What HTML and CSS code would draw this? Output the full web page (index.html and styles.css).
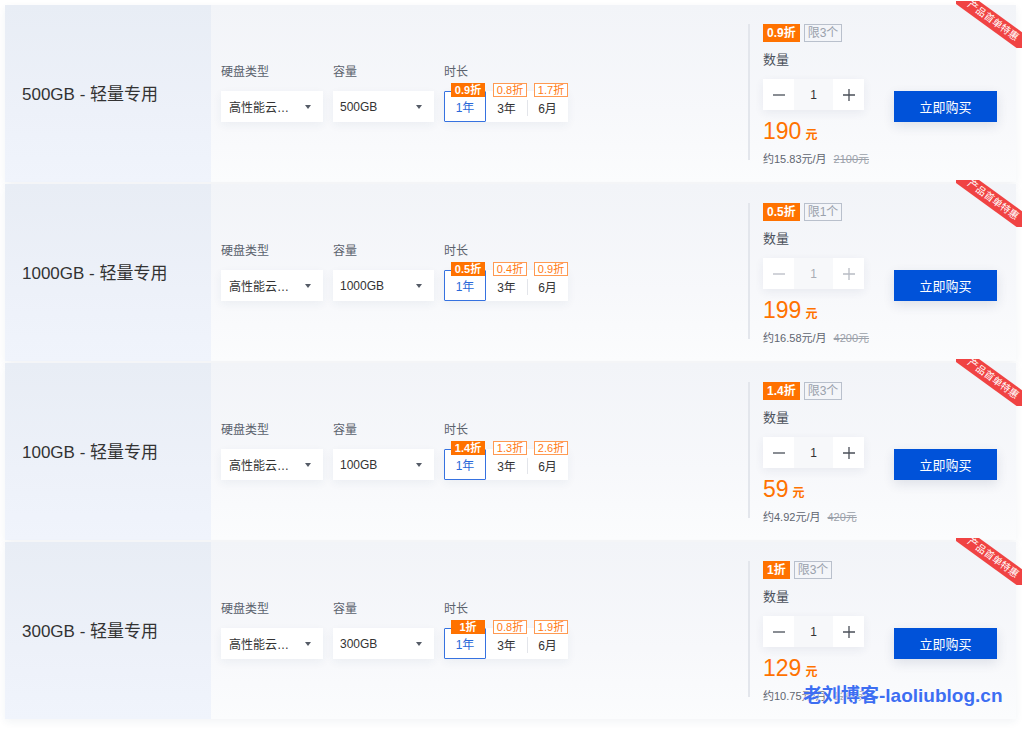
FILE: index.html
```html
<!DOCTYPE html>
<html lang="zh-CN">
<head>
<meta charset="utf-8">
<title>轻量专用</title>
<link rel="stylesheet" href="styles.css">
</head>
<body>
<div class="list">

  <div class="card">
    <div class="name">500GB - 轻量专用</div>
    <div class="config">
      <div class="field"><div class="label">硬盘类型</div><div class="select s-type"><span>高性能云…</span><i class="caret"></i></div></div>
      <div class="field"><div class="label">容量</div><div class="select s-cap"><span>500GB</span><i class="caret"></i></div></div>
      <div class="field"><div class="label">时长</div>
        <div class="seg">
          <div class="opt active"><span class="ttag fill">0.9折</span>1年</div>
          <div class="opt"><span class="ttag">0.8折</span>3年</div>
          <div class="opt sep"><span class="ttag">1.7折</span>6月</div>
        </div>
      </div>
    </div>
    <div class="buy">
      <div class="order">
        <div class="tags"><span class="tag fill">0.9折</span><span class="tag limit">限3个</span></div>
        <div class="qlabel">数量</div>
        <div class="counter">
          <div class="cbtn"><svg width="14" height="14" viewBox="0 0 14 14"><path d="M1 7h12" /></svg></div>
          <div class="cval">1</div>
          <div class="cbtn"><svg width="14" height="14" viewBox="0 0 14 14"><path d="M1 7h12M7 1v12" /></svg></div>
        </div>
        <div class="price">190<span class="unit">元</span></div>
        <div class="sub">约15.83元/月<s>2100元</s></div>
      </div>
      <button class="btn">立即购买</button>
    </div>
    <div class="ribbon"></div>
    <div class="ribbon-text">产品首单特惠</div>
  </div>

  <div class="card">
    <div class="name">1000GB - 轻量专用</div>
    <div class="config">
      <div class="field"><div class="label">硬盘类型</div><div class="select s-type"><span>高性能云…</span><i class="caret"></i></div></div>
      <div class="field"><div class="label">容量</div><div class="select s-cap"><span>1000GB</span><i class="caret"></i></div></div>
      <div class="field"><div class="label">时长</div>
        <div class="seg">
          <div class="opt active"><span class="ttag fill">0.5折</span>1年</div>
          <div class="opt"><span class="ttag">0.4折</span>3年</div>
          <div class="opt sep"><span class="ttag">0.9折</span>6月</div>
        </div>
      </div>
    </div>
    <div class="buy">
      <div class="order">
        <div class="tags"><span class="tag fill">0.5折</span><span class="tag limit">限1个</span></div>
        <div class="qlabel">数量</div>
        <div class="counter disabled">
          <div class="cbtn"><svg width="14" height="14" viewBox="0 0 14 14"><path d="M1 7h12" /></svg></div>
          <div class="cval">1</div>
          <div class="cbtn"><svg width="14" height="14" viewBox="0 0 14 14"><path d="M1 7h12M7 1v12" /></svg></div>
        </div>
        <div class="price">199<span class="unit">元</span></div>
        <div class="sub">约16.58元/月<s>4200元</s></div>
      </div>
      <button class="btn">立即购买</button>
    </div>
    <div class="ribbon"></div>
    <div class="ribbon-text">产品首单特惠</div>
  </div>

  <div class="card">
    <div class="name">100GB - 轻量专用</div>
    <div class="config">
      <div class="field"><div class="label">硬盘类型</div><div class="select s-type"><span>高性能云…</span><i class="caret"></i></div></div>
      <div class="field"><div class="label">容量</div><div class="select s-cap"><span>100GB</span><i class="caret"></i></div></div>
      <div class="field"><div class="label">时长</div>
        <div class="seg">
          <div class="opt active"><span class="ttag fill">1.4折</span>1年</div>
          <div class="opt"><span class="ttag">1.3折</span>3年</div>
          <div class="opt sep"><span class="ttag">2.6折</span>6月</div>
        </div>
      </div>
    </div>
    <div class="buy">
      <div class="order">
        <div class="tags"><span class="tag fill">1.4折</span><span class="tag limit">限3个</span></div>
        <div class="qlabel">数量</div>
        <div class="counter">
          <div class="cbtn"><svg width="14" height="14" viewBox="0 0 14 14"><path d="M1 7h12" /></svg></div>
          <div class="cval">1</div>
          <div class="cbtn"><svg width="14" height="14" viewBox="0 0 14 14"><path d="M1 7h12M7 1v12" /></svg></div>
        </div>
        <div class="price">59<span class="unit">元</span></div>
        <div class="sub">约4.92元/月<s>420元</s></div>
      </div>
      <button class="btn">立即购买</button>
    </div>
    <div class="ribbon"></div>
    <div class="ribbon-text">产品首单特惠</div>
  </div>

  <div class="card">
    <div class="name">300GB - 轻量专用</div>
    <div class="config">
      <div class="field"><div class="label">硬盘类型</div><div class="select s-type"><span>高性能云…</span><i class="caret"></i></div></div>
      <div class="field"><div class="label">容量</div><div class="select s-cap"><span>300GB</span><i class="caret"></i></div></div>
      <div class="field"><div class="label">时长</div>
        <div class="seg">
          <div class="opt active"><span class="ttag fill">1折</span>1年</div>
          <div class="opt"><span class="ttag">0.8折</span>3年</div>
          <div class="opt sep"><span class="ttag">1.9折</span>6月</div>
        </div>
      </div>
    </div>
    <div class="buy">
      <div class="order">
        <div class="tags"><span class="tag fill">1折</span><span class="tag limit">限3个</span></div>
        <div class="qlabel">数量</div>
        <div class="counter">
          <div class="cbtn"><svg width="14" height="14" viewBox="0 0 14 14"><path d="M1 7h12" /></svg></div>
          <div class="cval">1</div>
          <div class="cbtn"><svg width="14" height="14" viewBox="0 0 14 14"><path d="M1 7h12M7 1v12" /></svg></div>
        </div>
        <div class="price">129<span class="unit">元</span></div>
        <div class="sub">约10.75元/月<s>1260元</s></div>
      </div>
      <button class="btn">立即购买</button>
    </div>
    <div class="ribbon"></div>
    <div class="ribbon-text">产品首单特惠</div>
  </div>

</div>
<div class="watermark">老刘博客-laoliublog.cn</div>
</body>
</html>
```

FILE: styles.css
```css
html, body {
  margin: 0;
  padding: 0;
  background: #ffffff;
}
body {
  font-family: "Liberation Sans", "Noto Sans CJK SC", sans-serif;
  color: #333;
  position: relative;
  width: 1024px;
  height: 729px;
  overflow: hidden;
}
.list {
  width: 1011px;
  padding: 5px 0 0 5px;
  display: flex;
  flex-direction: column;
  gap: 2px;
}
.card {
  position: relative;
  height: 177px;
  display: flex;
  background: linear-gradient(180deg, #f2f4f8 0%, #f7f8fb 60%, #fbfcfd 100%);
  box-shadow: 0 3px 8px rgba(40, 60, 100, 0.06);
}
.name {
  width: 206px;
  flex: none;
  box-sizing: border-box;
  padding-left: 17px;
  padding-bottom: 2px;
  display: flex;
  align-items: center;
  font-size: 17px;
  color: #333;
  background: linear-gradient(180deg, #e8edf5 0%, #edf1f9 60%, #f0f4fc 100%);
}
.config {
  width: 537px;
  flex: none;
  box-sizing: border-box;
  padding: 59px 0 0 10px;
  display: flex;
  align-items: flex-start;
  gap: 10px;
}
.field {
  display: flex;
  flex-direction: column;
}
.label {
  font-size: 12px;
  line-height: 16px;
  color: #5b626d;
  margin-bottom: 11px;
}
.select {
  height: 31px;
  box-sizing: border-box;
  background: #fff;
  display: flex;
  align-items: center;
  justify-content: space-between;
  padding: 0 12px 0 8px;
  font-size: 12px;
  color: #333;
  box-shadow: 0 3px 10px rgba(40, 60, 100, 0.06);
}
.s-type { width: 102px; }
.s-cap { width: 101px; padding-left: 7px; }
.caret {
  width: 0;
  height: 0;
  border-left: 3.5px solid transparent;
  border-right: 3.5px solid transparent;
  border-top: 4px solid #555b66;
}
.seg {
  display: flex;
  height: 31px;
  background: #fff;
  box-shadow: 0 3px 10px rgba(40, 60, 100, 0.06);
}
.opt {
  position: relative;
  width: 41px;
  box-sizing: border-box;
  display: flex;
  align-items: center;
  justify-content: center;
  font-size: 12px;
  color: #333;
  padding-top: 1px;
}
.opt.active {
  width: 42px;
  border: 1px solid #3672e0;
  border-radius: 1px;
  color: #2a68d8;
  padding-top: 0;
}
.opt.sep::before {
  content: "";
  position: absolute;
  left: 0;
  top: 9px;
  bottom: 6px;
  width: 1px;
  background: #e3e5ea;
}
.ttag {
  position: absolute;
  top: -8px;
  right: 0;
  width: 34px;
  height: 14px;
  box-sizing: border-box;
  border: 1px solid #ff9a52;
  background: #fff;
  color: #ff7a14;
  font-size: 11px;
  line-height: 12px;
  text-align: center;
}
.opt.active .ttag {
  top: -9px;
  right: 0;
}
.ttag.fill {
  background: #ff7200;
  border-color: #ff7200;
  color: #fff;
  font-weight: bold;
}
.buy {
  flex: 1;
  display: flex;
  align-items: flex-start;
  padding-top: 19px;
}
.order {
  width: 131px;
  height: 136px;
  box-sizing: border-box;
  border-left: 2px solid #e3e6ec;
  padding-left: 13px;
}
.tags {
  display: flex;
  gap: 4px;
}
.tag {
  height: 18px;
  box-sizing: border-box;
  padding: 0 3px;
  font-size: 12px;
  line-height: 16px;
  border: 1px solid #ff7200;
  background: #ff7200;
  color: #fff;
}
.tag.fill { font-weight: bold; }
.tag.limit {
  background: transparent;
  border-color: #b9c0cc;
  color: #9aa1ac;
}
.qlabel {
  margin-top: 9px;
  font-size: 13px;
  line-height: 18px;
  color: #4c525c;
}
.counter {
  margin-top: 10px;
  display: flex;
  width: 101px;
  height: 31px;
  box-shadow: 0 3px 10px rgba(40, 60, 100, 0.07);
}
.cbtn {
  width: 31px;
  background: #fff;
  display: flex;
  align-items: center;
  justify-content: center;
}
.cbtn path {
  stroke: #4a4f58;
  stroke-width: 1.3;
  fill: none;
}
.cval {
  width: 39px;
  background: #f7f8fa;
  display: flex;
  align-items: center;
  justify-content: center;
  font-size: 12px;
  color: #333;
}
.counter.disabled .cbtn path { stroke: #b8bcc4; }
.counter.disabled .cval { color: #a9adb5; }
.price {
  margin-top: 8px;
  font-size: 23px;
  line-height: 26px;
  color: #ff7200;
}
.unit {
  font-size: 12px;
  font-weight: bold;
  margin-left: 4px;
}
.sub {
  margin-top: 3px;
  font-size: 11px;
  line-height: 16px;
  color: #5f6570;
  white-space: nowrap;
}
.sub s {
  margin-left: 7px;
  color: #9aa0a9;
}
.btn {
  margin: 67px 0 0 15px;
  width: 103px;
  height: 31px;
  border: none;
  background: #0052d9;
  color: #fff;
  font-family: "Liberation Sans", "Noto Sans CJK SC", sans-serif;
  font-size: 13px;
  padding: 0;
  box-shadow: 0 4px 12px rgba(30, 50, 90, 0.12);
}
.ribbon {
  position: absolute;
  top: -4px;
  right: -6px;
  width: 66px;
  height: 47px;
  overflow: hidden;
}
.ribbon::before {
  content: "";
  position: absolute;
  left: -18px;
  top: 12px;
  width: 110px;
  height: 16px;
  background: #f04343;
  transform: rotate(36deg);
}
.ribbon-text {
  position: absolute;
  top: 8px;
  right: -9px;
  width: 64px;
  height: 16px;
  color: #fff;
  font-size: 10px;
  line-height: 16px;
  text-align: center;
  white-space: nowrap;
  transform: rotate(36deg);
}
.watermark {
  position: absolute;
  left: 803px;
  top: 685px;
  font-size: 19px;
  line-height: 22px;
  font-weight: bold;
  color: #3d6ef2;
  text-shadow: 0 0 1px #fff, 0 0 2px #fff;
  white-space: nowrap;
}
```
